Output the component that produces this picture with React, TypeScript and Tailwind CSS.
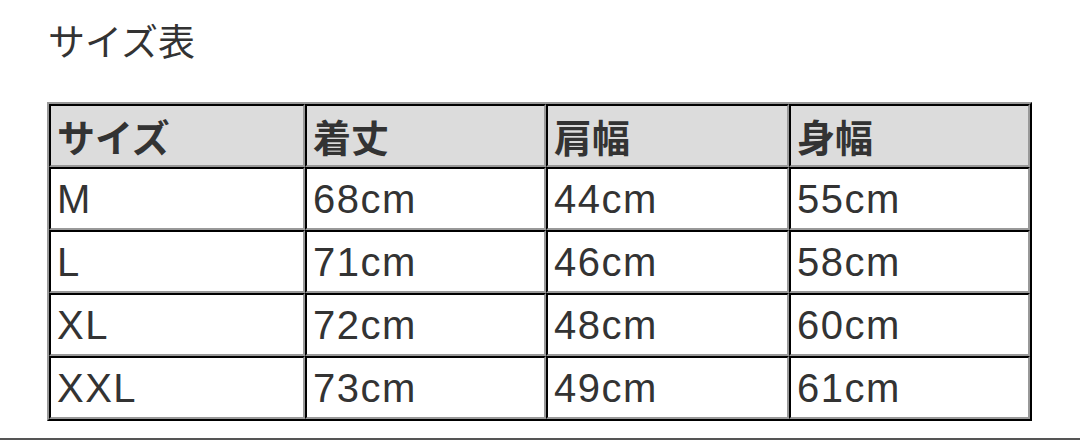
const HEAD = ['サイズ', '着丈', '肩幅', '身幅'];

const ROWS = [
  ['M', '68cm', '44cm', '55cm'],
  ['L', '71cm', '46cm', '58cm'],
  ['XL', '72cm', '48cm', '60cm'],
  ['XXL', '73cm', '49cm', '61cm'],
];

const font = "font-['Liberation_Sans','Noto_Sans_CJK_JP',sans-serif]";

export default function App() {
  return (
    <div className={`flex h-[440px] w-[1080px] flex-col border-b-2 border-[#555] bg-white text-[#333] ${font}`}>
      <div className="pl-[48px] pt-[22px] text-[37px] leading-[36px] font-['Noto_Sans_CJK_JP',sans-serif]">
        サイズ表
      </div>
      <div className="mt-[44px] pl-[47px]">
        <table className="table-fixed border-separate border-spacing-0 border-2 border-t-[#999] border-l-[#999] border-r-black border-b-black">
          <colgroup>
            <col className="w-[256px]" />
            <col className="w-[241px]" />
            <col className="w-[243px]" />
            <col className="w-[241px]" />
          </colgroup>
          <thead>
            <tr>
              {HEAD.map((h) => (
                <th
                  key={h}
                  className="h-[63px] border-2 border-t-black border-l-black border-r-[#999] border-b-[#999] bg-[#dcdcdc] px-[6px] text-left align-middle text-[38px] font-bold leading-none font-['Noto_Sans_CJK_JP',sans-serif]"
                >
                  {h}
                </th>
              ))}
            </tr>
          </thead>
          <tbody>
            {ROWS.map((r) => (
              <tr key={r[0]}>
                {r.map((c, i) => (
                  <td
                    key={i}
                    className="h-[63px] border-2 border-t-black border-l-black border-r-[#999] border-b-[#999] px-[6px] text-left align-middle text-[40px] leading-none tracking-[1.5px]"
                  >
                    {c}
                  </td>
                ))}
              </tr>
            ))}
          </tbody>
        </table>
      </div>
    </div>
  );
}
